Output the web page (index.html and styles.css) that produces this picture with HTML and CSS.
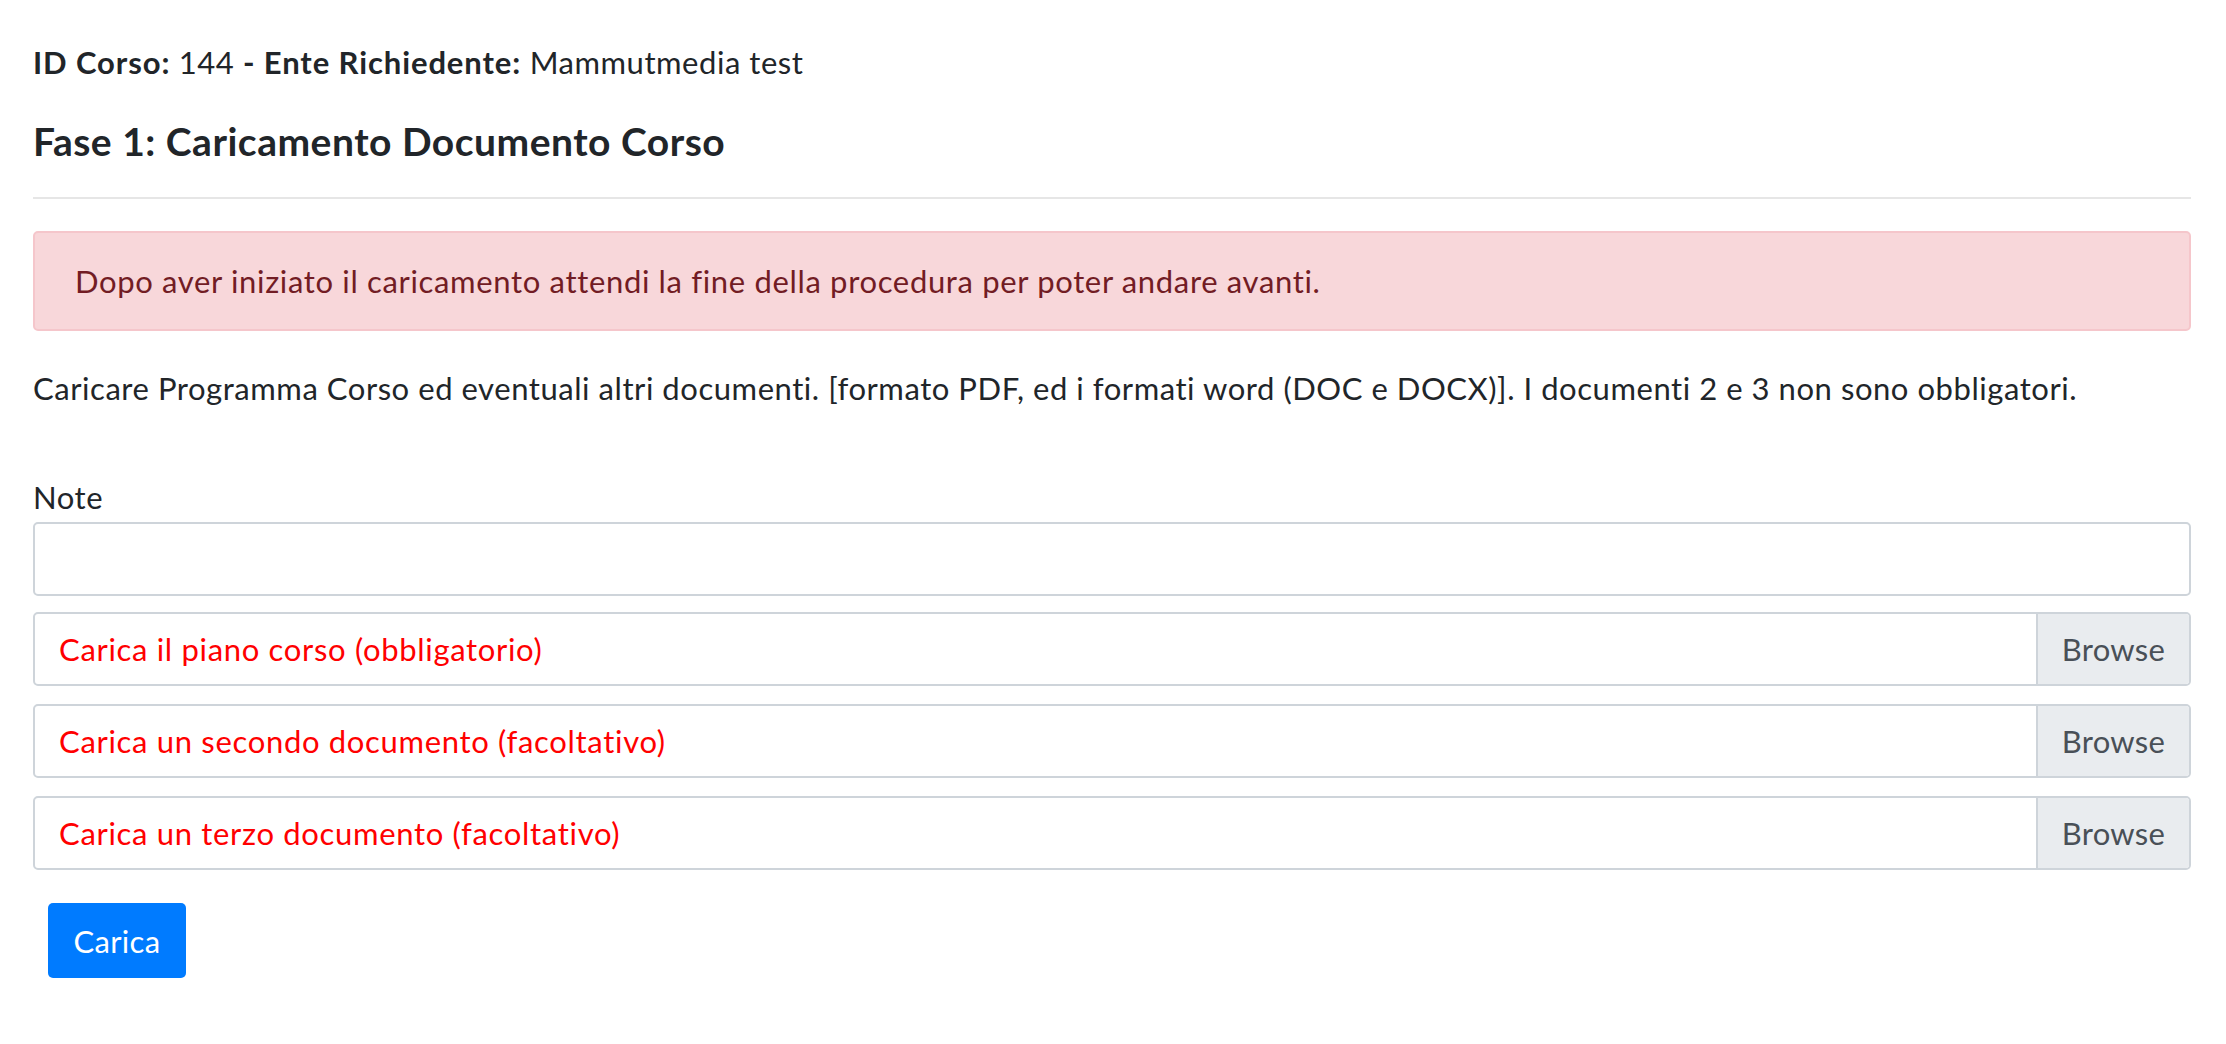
FILE: index.html
```html
<!DOCTYPE html>
<html lang="it">
<head>
<meta charset="utf-8">
<title>Fase 1: Caricamento Documento Corso</title>
<link rel="stylesheet" href="styles.css">
</head>
<body>
<div class="page">
  <p class="meta"><b>ID Corso:</b> 144 <b>- Ente Richiedente:</b> Mammutmedia test</p>
  <h5 class="title">Fase 1: Caricamento Documento Corso</h5>
  <hr class="rule">
  <div class="alert">Dopo aver iniziato il caricamento attendi la fine della procedura per poter andare avanti.</div>
  <p class="intro">Caricare Programma Corso ed eventuali altri documenti. [formato PDF, ed i formati word (DOC e DOCX)]. I documenti 2 e 3 non sono obbligatori.</p>
  <form class="upload">
    <label class="note-label" for="note">Note</label>
    <input class="field" id="note" type="text">
    <div class="file file-first"><span class="file-text">Carica il piano corso (obbligatorio)</span><span class="file-btn">Browse</span></div>
    <div class="file"><span class="file-text">Carica un secondo documento (facoltativo)</span><span class="file-btn">Browse</span></div>
    <div class="file"><span class="file-text">Carica un terzo documento (facoltativo)</span><span class="file-btn">Browse</span></div>
    <button class="submit" type="button">Carica</button>
  </form>
</div>
</body>
</html>
```

FILE: styles.css
```css
html, body {
  margin: 0;
  padding: 0;
  background: #ffffff;
}

body {
  font-family: "Lato", "Open Sans", sans-serif;
  font-size: 31px;
  line-height: 46px;
  letter-spacing: 0.55px;
  color: #212529;
}

.page {
  padding: 39px 35px 0 33px;
}

.meta {
  margin: 0 0 33px 0;
}

.meta b {
  font-weight: 700;
  letter-spacing: 0.9px;
}

.title {
  margin: 0;
  font-size: 39px;
  line-height: 47px;
  font-weight: 700;
  letter-spacing: 0.5px;
}

.rule {
  margin: 32px 0 0 0;
  border: 0;
  height: 2px;
  background: #e6e6e6;
}

.alert {
  margin-top: 32px;
  box-sizing: border-box;
  height: 100px;
  padding: 25px 40px;
  background: #f8d7da;
  border: 2px solid #f5c6cb;
  border-radius: 5px;
  color: #721c24;
  letter-spacing: 0.66px;
}

.intro {
  margin: 34px 0 0 0;
}

.upload {
  margin-top: 63px;
}

.note-label {
  display: block;
  margin-bottom: 2px;
}

.field {
  display: block;
  box-sizing: border-box;
  width: 100%;
  height: 74px;
  margin: 0;
  border: 2px solid #ced4da;
  border-radius: 5px;
  background: #ffffff;
  font: inherit;
}

.file {
  display: flex;
  align-items: stretch;
  box-sizing: border-box;
  height: 74px;
  margin-top: 18px;
  border: 2px solid #ced4da;
  border-radius: 5px;
  overflow: hidden;
}

.file-first {
  margin-top: 16px;
}

.file-text {
  flex: 1;
  display: flex;
  align-items: center;
  padding-left: 24px;
  color: #ff0000;
  letter-spacing: 0.68px;
}

.file-btn {
  display: flex;
  align-items: center;
  justify-content: center;
  box-sizing: border-box;
  width: 153px;
  border-left: 2px solid #ced4da;
  background: #e9ecef;
  color: #495057;
  letter-spacing: 0.3px;
}

.submit {
  display: block;
  box-sizing: border-box;
  width: 138px;
  height: 75px;
  margin: 33px 0 0 15px;
  padding: 0;
  border: 0;
  border-radius: 5px;
  background: #007bff;
  color: #ffffff;
  font: inherit;
  letter-spacing: 0.3px;
  cursor: pointer;
}
```
